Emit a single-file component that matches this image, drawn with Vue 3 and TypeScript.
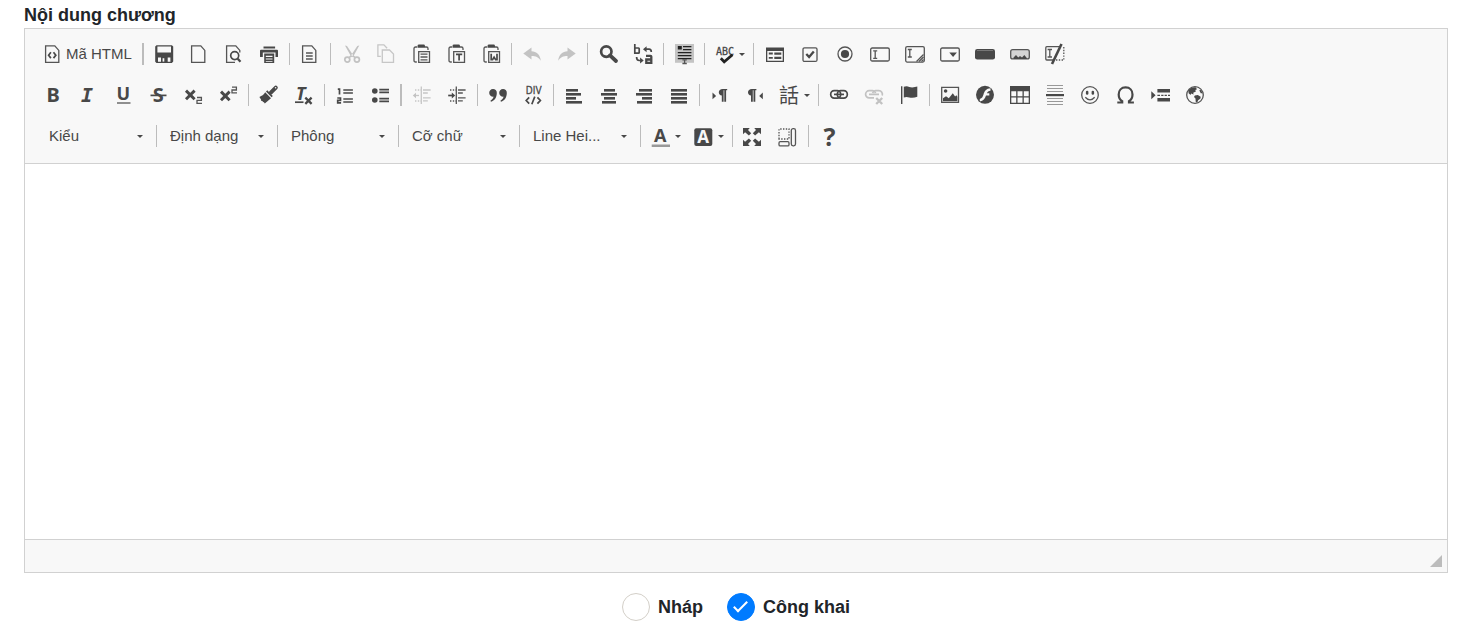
<script setup lang="ts">
import { ref } from 'vue'

interface Tool {
  id: string
  label: string
  text?: string
  menu?: boolean
  off?: boolean
}

type Group = Tool[]

const t = (id: string, label: string, extra: Partial<Tool> = {}): Tool => ({ id, label, ...extra })

const rowOne: Group[] = [
  [t('source', 'Mã HTML', { text: 'Mã HTML' })],
  [t('save', 'Lưu'), t('page', 'Trang mới'), t('preview', 'Xem trước'), t('print', 'In')],
  [t('template', 'Mẫu dựng sẵn')],
  [
    t('cut', 'Cắt', { off: true }),
    t('copy', 'Sao chép', { off: true }),
    t('paste', 'Dán'),
    t('pasteText', 'Dán theo định dạng văn bản thuần'),
    t('pasteWord', 'Dán với định dạng Word'),
  ],
  [t('undo', 'Khôi phục thao tác', { off: true }), t('redo', 'Làm lại thao tác', { off: true })],
  [t('find', 'Tìm kiếm'), t('replace', 'Thay thế')],
  [t('selectAll', 'Chọn tất cả')],
  [t('spell', 'Kiểm tra chính tả', { menu: true })],
  [
    t('form', 'Biểu mẫu'),
    t('checkbox', 'Nút kiểm'),
    t('radio', 'Nút chọn'),
    t('textField', 'Trường văn bản'),
    t('textArea', 'Vùng văn bản'),
    t('select', 'Ô chọn'),
    t('button', 'Nút'),
    t('imageButton', 'Nút hình ảnh'),
    t('hidden', 'Trường ẩn'),
  ],
]

const rowTwo: Group[] = [
  [
    t('bold', 'Đậm'),
    t('italic', 'Nghiêng'),
    t('underline', 'Gạch chân'),
    t('strike', 'Gạch xuyên ngang'),
    t('sub', 'Chỉ số dưới'),
    t('sup', 'Chỉ số trên'),
  ],
  [t('brush', 'Sao chép định dạng'), t('clear', 'Xoá định dạng')],
  [t('ol', 'Danh sách có thứ tự'), t('ul', 'Danh sách không thứ tự')],
  [
    t('outdent', 'Dịch ra ngoài', { off: true }),
    t('indent', 'Dịch vào trong'),
  ],
  [t('quote', 'Khối trích dẫn'), t('div', 'Tạo khối các thành phần')],
  [t('left', 'Canh trái'), t('center', 'Canh giữa'), t('right', 'Canh phải'), t('justify', 'Canh đều')],
  [t('ltr', 'Văn bản hướng từ trái sang phải'), t('rtl', 'Văn bản hướng từ phải sang trái'), t('lang', 'Ngôn ngữ', { menu: true })],
  [t('link', 'Chèn liên kết'), t('unlink', 'Xoá liên kết', { off: true }), t('anchor', 'Điểm neo')],
  [
    t('image', 'Hình ảnh'),
    t('flash', 'Flash'),
    t('table', 'Bảng'),
    t('hr', 'Chèn đường phân cách ngang'),
    t('smiley', 'Hình biểu lộ cảm xúc'),
    t('omega', 'Chèn ký tự đặc biệt'),
    t('pageBreak', 'Chèn ngắt trang'),
    t('iframe', 'Iframe'),
  ],
]

const rowThree: Group[] = [
  [t('textColor', 'Màu chữ', { menu: true }), t('bgColor', 'Màu nền', { menu: true })],
  [t('maximize', 'Phóng to tối đa'), t('blocks', 'Hiển thị các khối')],
  [t('about', 'Thông tin')],
]

const combos = ['Kiểu', 'Định dạng', 'Phông', 'Cỡ chữ', 'Line Hei...']

const pageShape = '<path class="ln" d="M2.6 1.8h9.2l4 4.6v12H2.6z"/>'
const clipboard =
  '<path class="ln" d="M5.8 18H4.6Q3 18 3 16.4V4.6Q3 3 4.6 3H6M14 3h1.4Q17 3 17 4.6V6"/><path d="M6.5 3.8V2Q6.5.6 8 .6h4.6Q14 .6 14 2v1.8z"/><path class="ln" d="M7.7 7.6h10.8v10.8H7.7z"/>'
const bars = (rows: number[][]): string =>
  rows.map(([x, w], i) => `<rect x="${x}" y="${[4, 8, 12, 16][i]}" width="${w}" height="2.6"/>`).join('')
const dentLines =
  '<path class="ln" d="M9.3 1.6v17.4M11 5h7.6M11 8h4.8M11 12.8h7.6M11 15.8h4.8"/><path class="ln" stroke-dasharray="1.4 1.4" d="M3 5h6M3 16h6"/>'
const pilcrow = (x: number): string =>
  `<path transform="translate(${x} 0)" d="M8.6 4v1.2H7.5v11.6H5.7V5.2H5v11.6H3.2v-6.2C1.4 10.4.2 9 .2 7.3.2 5.3 1.8 4 4 4z"/>`

const icons: Record<string, string> = {
  source: pageShape + '<path class="ln b" d="M7.9 8.3 5.6 11.2l2.3 2.9M10.5 8.3l2.3 2.9-2.3 2.9"/>',
  save: '<path fill-rule="evenodd" d="M2.500 1.300h15.400l1.300 1.300v15L17.900 19H2.500L1.200 17.700V2.600zM3.400 2.600v6h13.600v-6zM4 13.400v4.300h12.400v-4.300z"/><path d="M7 12.500h6.700V18.500H7z"/><path class="pale" d="M8.600 14.200h1.700v3.400H8.600z"/>',
  page: pageShape,
  preview: '<path class="ln" d="M11 18.400H2.600V1.800h9.200l4 4.600v2"/><circle class="ln b" cx="10.700" cy="11.600" r="4"/><path class="ln w" d="m13.700 14.800 2.800 3"/>',
  print: '<path d="M4.500 2.600h11.600v1.800H4.500zM2 5.700h16q1 0 1 1V13h-2.500V8.500H3.800V13H1V6.700q0-1 1-1z"/><path fill-rule="evenodd" d="M5.200 9.400h10V19h-10zm1.600 2.400v1.100h6.700v-1.100zm0 2.700v1.100h6.700v-1.100zm0 2.400v.9h6.700v-.9z"/>',
  template: pageShape + '<path class="ln" d="M6 9h6.700M6 12h6.700M6 15h6.700"/>',
  cut: '<path d="M4 1.500 6 2l6.300 9.600-1.800 1.600zM18.300 1.500 16.300 2 10 11.600l1.800 1.600z"/><circle class="ln b" cx="6.300" cy="15.600" r="2.500"/><circle class="ln b" cx="15.900" cy="15.600" r="2.500"/><path class="ln b" d="m8 13.700 2.600-2M14.200 13.700l-2.600-2"/>',
  copy: '<path class="ln" d="M4.800 12.400H1.900V.8h6l3.200 3.400M6.300 6h7.200l4 4v8.400H6.300z"/>',
  paste: clipboard + '<path class="ln" d="M9.500 10.200h7M9.500 13h7M9.500 15.800h7"/>',
  pasteText: clipboard + '<path class="ln b" d="M10 10.400h6.200M13.100 10.400v6.200"/>',
  pasteWord: clipboard + '<path class="ln b" d="M10.200 9.800v5.800h1.400l1.500-2.500 1.500 2.500H16V9.800"/>',
  undo: '<path d="M1.300 9.400 9.500 3.600v3.700c5 .2 8.700 3.200 9.300 9.500-2.300-3.600-5-4.700-9.300-4.700v3.300z"/>',
  redo: '<path d="M18.700 9.400 10.500 3.600v3.700c-5 .2-8.700 3.200-9.300 9.500 2.300-3.600 5-4.700 9.300-4.700v3.300z"/>',
  find: '<circle cx="8.300" cy="7.600" r="5.200" fill="none" stroke="#484848" stroke-width="2.700"/><path d="m12 11.400 6 5.600" fill="none" stroke="#484848" stroke-width="3.800" stroke-linecap="round"/>',
  replace: '<path class="ln b" d="M1.800 0v9.200h3.700q.7 0 .7-.8V4.800q0-.8-.7-.8H1.800"/><path class="ln w" d="M13 11.800h4.500q.8 0 .8.800v6.200h-5v-3.300h5"/><path class="ln b" d="M12 5.200h4q2.300 0 2.300 2.700M3.600 13q0 3.500 2.600 3.500h2"/><path d="m10 5.200 3.600-3v6zM10.700 16.500l-3.600-3v6z"/>',
  selectAll: '<path fill="#c4c4c4" d="M1 0h19v18.800H1z"/><path fill="#222" d="M3.800 2h4v3.500h-4zM9 2h8.400v1.300H9zM9 4.900h8.400v1.300H9zM3.800 7.900h13.600v1.300H3.800zM3.800 10.900h13.600v1.300H3.800zM3.800 13.900h13.600v1.300H3.800z"/><path class="ln" d="M8.400 15.900h4.400M10.600 15.900v3.700M8.400 19.500h4.400"/>',
  spell: '<text class="mono" x="1" y="11" font-size="10" stroke="#484848" stroke-width=".3">ABC</text><path d="m5.800 14.300 3.400 3.500 8.300-7" fill="none" stroke="#222" stroke-width="2.700"/>',
  form: '<path fill-rule="evenodd" d="M2 3.600h18V18H2zM3.300 7v9.700h15.400V7z"/><path d="M4.800 8.600h4v1.800h-4zM4.800 13h4v1.800h-4zM10.300 8.400h7v2.400h-7zM10.300 12.700h7v2.400h-7z"/>',
  checkbox: '<rect class="ln" x="4" y="3.800" width="14" height="13.600" rx="1.500"/><path class="ln w" d="m7.300 10 2.800 3 4.700-5.600"/>',
  radio: '<circle class="ln" cx="11" cy="10" r="7"/><circle cx="11" cy="10" r="4.100"/>',
  textField: '<rect class="ln" x="1.700" y="4" width="18.600" height="13" rx="1.500"/><path class="ln" d="M4.200 6.900h4M6.200 6.900v7.400M4.200 14.300h4"/>',
  textArea: '<rect class="ln" x="1.700" y="2.600" width="18.600" height="15.500" rx="1.500"/><path class="ln" d="M3.800 5.500h4M5.800 5.500V13M3.800 13h4M12.500 17.500l7-7M15 17.500l4.500-4.500M17.500 17.500l2-2"/>',
  select: '<rect class="ln" x="1.700" y="4" width="18.600" height="13" rx="1.500"/><path d="M10.300 8.600h7.600L14.100 13z"/>',
  button: '<rect x="1" y="5" width="20" height="10.600" rx="2.300"/><path fill="none" stroke="#777" d="M3 6.500h16"/>',
  imageButton: '<rect x="1.700" y="5.700" width="18.600" height="9.200" rx="2" fill="#d4d4d4" stroke="#555" stroke-width="1.300"/><path d="M4.500 15v-1.500L7 11l2.300 2.500L11 12l2 1.500 2.300-2.600 2.500 3V15z"/>',
  hidden: '<path class="ln" d="M9 16H2.800q-1 0-1-1V3.700q0-1 1-1H15M3.600 5.500H8M5.800 5.500V13M3.600 13H8"/><path fill="none" stroke="#484848" stroke-width="2.600" d="M8 20 17.500 0"/><path class="ln" stroke-dasharray="1.400 1.400" d="M19.800 3v13M12 16h8"/>',
  bold: '<text class="noto heavy" x="3.500" y="17" font-size="20">B</text>',
  italic: '<text class="mono heavy slant" x="3" y="17" font-size="20">I</text>',
  underline: '<text class="noto heavy" x="3.600" y="15" font-size="18">U</text><path class="ln" d="M4 18h13.500"/>',
  strike: '<text class="noto heavy" x="4.800" y="17" font-size="20">S</text><path class="ln b" d="M2.500 10.400h16"/>',
  sub: '<path fill="none" stroke="#484848" stroke-width="2.900" d="m3 5.600 8.600 8.600M11.600 5.600 3 14.200"/><path class="ln" d="M14 12.500h4.400v2.800H14v3h5"/>',
  sup: '<path fill="none" stroke="#484848" stroke-width="2.900" d="m3 6.600 8.600 8.600M11.600 6.600 3 15.200"/><path class="ln" d="M14 2.200h4.400V5H14v2.800h5"/>',
  brush: '<path d="M8.300 5.200 13.800 11l-1.200 1.300-5.600-5.700zM6.200 7.300l5.800 5.900-6.200 5.200-1-1.300-.8.200-.5-1.300-1.200.1-.3-1.500-1.600-2.600C2.900 10.800 4.700 10 6.200 7.300z"/><path fill="none" stroke="#484848" stroke-width="4" stroke-linecap="round" d="m11.800 7.700 5-5"/><circle class="pale" cx="16.600" cy="2.700" r=".8"/>',
  clear: '<text class="noto heavy slant" x="2" y="14.500" font-size="18">T</text><path class="ln b" d="M1 17.200h8.500"/><path class="ln w" d="m11.300 12.700 6.300 6.100M17.600 12.700l-6.300 6.100"/>',
  ol: '<path class="ln b" d="M8.300 5h9.600M8.300 8h9.600M8.300 14h9.600M8.300 17h9.600M2.800 4.200h1.700V9.500M2.300 13h3.200v2.300H2.700v2.500h3.400"/>',
  ul: '<circle cx="4.800" cy="6" r="2.800"/><circle cx="4.800" cy="15" r="2.800"/><path class="ln b" d="M9.300 4.600H19M9.300 7.400H19M9.300 13.600H19M9.300 16.400H19"/>',
  outdent: dentLines + '<path class="ln" d="M2.200 10.500h4.800"/><path d="m.8 10.500 3.200-2.800v5.600z"/>',
  indent: dentLines + '<path class="ln b" d="M1.200 10.500h4.600"/><path d="m8.200 10.500-3.400-3v6z"/>',
  quote: '<path d="M4.900 4a3.700 3.700 0 0 1 3.900 3.900c0 4.500-2.300 7.600-5.800 8.900l-.6-1.100c1.900-1.100 3-2.400 3.100-4.100A3.800 3.800 0 0 1 1.200 7.900 3.700 3.700 0 0 1 4.900 4zM14.900 4a3.700 3.700 0 0 1 3.900 3.900c0 4.500-2.300 7.600-5.800 8.900l-.6-1.100c1.900-1.100 3-2.400 3.100-4.100a3.800 3.800 0 0 1-4.300-3.700A3.700 3.700 0 0 1 14.900 4z"/>',
  div: '<text class="condensed" x="2.800" y="9.300" font-size="10" stroke="#484848" stroke-width=".3">DIV</text><path class="ln b" d="m6.200 12.300-3 3.200 3 3.200M14.400 12.300l3 3.200-3 3.200M11.800 11.600l-3 7.600"/>',
  left: bars([[2, 12], [2, 15], [2, 10], [2, 16]]),
  center: bars([[5, 11], [2, 16], [5, 11], [3, 14]]),
  right: bars([[5, 13], [2, 16], [8, 10], [3, 15]]),
  justify: bars([[2, 16], [2, 16], [2, 16], [2, 16]]),
  ltr: '<path d="m2.500 7.600 3.600 3.300-3.600 3.300z"/>' + pilcrow(8.6),
  rtl: pilcrow(2.8) + '<path d="M17.800 7.600 14.200 10.900l3.600 3.300z"/>',
  lang: '<text class="cjk" x="-1" y="17.500" font-size="20">話</text>',
  link: '<rect class="ln b" x="1.700" y="5.700" width="10" height="7.400" rx="3.500"/><rect class="ln b" x="8.300" y="5.700" width="10" height="7.400" rx="3.500"/><path class="ln b" d="M5 9.400h10"/>',
  unlink: '<path class="ln b" d="M10 12.900H5.200a3.600 3.600 0 0 1 0-7.200h3.400a3.400 3.400 0 0 1 3 2.300M5 9.300h10M8.600 8a3.400 3.400 0 0 1 3-2.300h3.300a3.600 3.600 0 0 1 3.300 4.800"/><path class="ln w" d="m12.200 13 6 6M18.200 13l-6 6"/>',
  anchor: '<path d="M2 1.300h1.400V19H2zM4.800 1.800c3.500-1.800 5.600.6 8.300.6 2.300 0 3.600-.8 5.200-.8v10.200c-1.800.5-3.300.9-5.200.9-2.900 0-5-1.700-8.300-.2z"/>',
  image: '<path class="ln" d="M1.700 2.400h16.800V17.400H1.700z"/><circle cx="5.600" cy="6" r="1.800"/><path d="M3 16.200v-3l3-2 2.800 2 4-5 2.300 3.200 1.300-1.200 1 1.600v4.400z"/>',
  flash: '<circle cx="10" cy="9.800" r="9"/><path class="pale" d="M15.500 3.200v2.600c-2.100.1-2.900.9-3.600 2.500h2.400v2.300h-3.300c-1 3.300-2.700 5.600-6.200 5.900v-2.600c2.200-.3 3-2 3.700-4.300.9-3.500 2.800-6.300 7-6.400z"/>',
  table: '<path fill-rule="evenodd" d="M0 1h20v18H0zm1.300 5.300v5h4.900v-5zm6.200 0v5h5v-5zm6.300 0v5h4.900v-5zM1.300 12.600v5.100h4.900v-5.100zm6.200 0v5.100h5v-5.100zm6.300 0v5.100h4.900v-5.100z"/>',
  hr: '<path stroke="#999" fill="none" d="M2 .5h16M2 3.500h16M2 6.500h16M2 13.500h16M2 16.500h16M2 19.500h16"/><path d="M1 9h18v2.200H1z"/>',
  smiley: '<circle class="ln" cx="10" cy="10" r="8.300"/><rect x="5.900" y="5.800" width="2.500" height="4" rx="1.200"/><rect x="11.600" y="5.800" width="2.500" height="4" rx="1.200"/><path class="ln" d="M5.300 12.200q4.700 5.300 9.400 0"/>',
  omega: '<path fill="none" stroke="#484848" stroke-width="2.200" d="M2.300 17.500h4.900v-1.300C4.600 14.600 3.700 12.200 3.700 9.400c0-4 2.600-7 6.900-7s6.900 3 6.900 7c0 2.800-.9 5.200-3.500 6.800v1.300h4.900"/>',
  pageBreak: '<path d="m1.300 6.200 4.300 4-4.300 4zM7.400 4H20v3.600H7.400zM7.400 13H20v3.600H7.400zM7.400 9.800H10V11H7.400zM11.200 9.800h2.300V11h-2.300zM14.600 9.800h2.300V11h-2.300zM18 9.800h2V11h-2z"/>',
  iframe: '<circle class="ln" cx="10" cy="10" r="8.300"/><path d="M3.300 5.500C5 3.200 7.600 2.200 10.600 2.300L12 4.200 10.300 5l.6 1.500-2.700 1.300.4 1.600-2.500-.8-.5 1.500-2-1.900zM9.800 10.500l3-.6 2.900 1.900-.4 2-2.200 1.500-.9 2.500-1.500-1-.2-3.200-1.500-1.600zM14.200 5.200l1.800-.3 1.600 3.300-1.800.1z"/>',
  textColor: '<text class="noto heavy" x="3" y="15.800" font-size="18">A</text><path fill="#999" d="M.7 18.500H19V21H.7z"/>',
  bgColor: '<rect x=".3" y="2.200" width="18" height="17.800" rx="2"/><text class="noto heavy pale" x="3.200" y="17" font-size="17">A</text>',
  maximize: '<path d="M0 2h6.800L5 4l3.200 3.200L5.900 9.500 2.100 6.200 0 8.300zM18 2v6.300l-2.100-2.100L12.100 9.500 9.800 7.200 13 4l-1.800-2zM0 20v-6.300l2.100 2.100L5.900 12.500l2.300 2.300L5 18l1.800 2zM18 20h-6.800l1.800-2-3.200-3.200 2.300-2.300 3.800 3.300 2.100-2.100z"/>',
  blocks: '<path class="ln" stroke-dasharray="1.400 1.400" d="M1 13V3h10v10z"/><rect class="ln" x="1" y="15.700" width="10" height="4.200" rx="1.200"/><rect class="ln" x="13.300" y="2.700" width="4.200" height="17.200" rx="1.800"/>',
  about: '<text class="noto heavy" x="4.500" y="20" font-size="25">?</text>',
}

const content = ref('')
const status = ref('public')
</script>

<template>
  <main class="page">
    <label class="title" for="chapter-content">Nội dung chương</label>
    <section class="editor">
      <div class="toolbar" role="toolbar" aria-label="Thanh công cụ">
        <div v-for="(row, r) in [rowOne, rowTwo, rowThree]" :key="r" class="row">
          <div v-if="r === 2" class="combos">
            <div v-for="name in combos" :key="name" class="combo">
              <select :aria-label="name">
                <option>{{ name }}</option>
              </select>
              <span class="arrow"></span>
            </div>
          </div>
          <div
            v-for="(group, g) in row"
            :key="g"
            class="group"
            :class="{ strong: (r === 0 && g === 0) || (r === 1 && g === 2), last: g === row.length - 1 }"
          >
            <button
              v-for="tool in group"
              :key="tool.id"
              type="button"
              class="tool"
              :class="{ off: tool.off, menu: tool.menu, wide: tool.text }"
              :title="tool.label"
              :aria-label="tool.label"
              :disabled="tool.off"
            >
              <svg class="icon" viewBox="0 0 20 20" aria-hidden="true" v-html="icons[tool.id]"></svg>
              <span v-if="tool.text" class="caption">{{ tool.text }}</span>
              <span v-if="tool.menu" class="arrow"></span>
            </button>
          </div>
        </div>
      </div>
      <textarea id="chapter-content" v-model="content" class="content"></textarea>
      <div class="footer"><span class="grip"></span></div>
    </section>
    <div class="status">
      <label class="choice"><input v-model="status" type="radio" name="status" value="draft" />Nháp</label>
      <label class="choice"><input v-model="status" type="radio" name="status" value="public" />Công khai</label>
    </div>
  </main>
</template>

<style>
body {
  margin: 0;
  background: #fff;
}
</style>

<style scoped>
.page {
  padding: 3px 23px 8px 24px;
  font-family: "Liberation Sans", Arial, sans-serif;
  color: #212529;
}
.title {
  display: block;
  font-size: 18px;
  font-weight: 700;
  line-height: 25px;
}
.editor {
  border: 1px solid #d1d1d1;
}
.toolbar {
  display: flex;
  flex-direction: column;
  gap: 1px;
  padding: 5px 11px 7px;
  background: #f8f8f8;
  border-bottom: 1px solid #d1d1d1;
}
.row,
.combos {
  display: flex;
  flex-wrap: wrap;
  align-items: center;
}
.row {
  min-height: 40px;
}
.combos {
  padding-left: 3px;
}
.group,
.combo {
  display: flex;
  align-items: center;
}
.group::after,
.combo::after {
  content: "";
  width: 1px;
  height: 22px;
  margin: 0 3px 0 2px;
  background: #bcbcbc;
}
.group.strong::after {
  width: 2px;
}
.group.last::after {
  display: none;
}
.tool {
  display: flex;
  align-items: center;
  width: 35px;
  height: 40px;
  padding: 0 0 0 7px;
  border: 0;
  background: none;
  color: #484848;
  font: 15px/20px "Liberation Sans", Arial, sans-serif;
}
.tool.menu {
  width: 43px;
}
.tool.wide {
  width: auto;
  padding-right: 8px;
}
.caption {
  margin-left: 3px;
  white-space: nowrap;
}
.icon {
  flex: none;
  width: 20px;
  height: 20px;
  overflow: visible;
  fill: #484848;
}
.off .icon {
  opacity: 0.3;
}
.icon :deep(.ln) {
  fill: none;
  stroke: #555;
  stroke-width: 1.3;
}
.icon :deep(.ln.b) {
  stroke: #484848;
  stroke-width: 1.7;
}
.icon :deep(.ln.w) {
  stroke: #484848;
  stroke-width: 2.3;
}
.icon :deep(.pale) {
  fill: #f8f8f8;
}
.icon :deep(.noto) {
  font-family: "Noto Sans", sans-serif;
}
.icon :deep(.mono) {
  font-family: "DejaVu Sans Mono", monospace;
}
.icon :deep(.condensed) {
  font-family: "DejaVu Sans Condensed", "DejaVu Sans", sans-serif;
}
.icon :deep(.cjk) {
  font-family: "Noto Sans CJK TC", sans-serif;
}
.icon :deep(.heavy) {
  font-weight: 700;
}
.icon :deep(.slant) {
  font-style: italic;
}
.arrow {
  flex: none;
  width: 0;
  height: 0;
  border: 3px solid transparent;
  border-top-color: #484848;
  border-bottom: 0;
}
.tool .arrow {
  margin-left: 4px;
}
.combo select {
  width: 98px;
  height: 40px;
  padding: 0 0 0 10px;
  border: 0;
  appearance: none;
  background: none;
  color: #484848;
  font: 15px/20px "Liberation Sans", Arial, sans-serif;
}
.combo .arrow {
  margin-right: 11px;
}
.content {
  display: block;
  box-sizing: border-box;
  width: 100%;
  height: 375px;
  padding: 20px;
  border: 0;
  outline: 0;
  resize: none;
  background: #fff;
  font: 16px/24px "Liberation Sans", Arial, sans-serif;
}
.footer {
  display: flex;
  align-items: flex-end;
  justify-content: flex-end;
  box-sizing: border-box;
  height: 33px;
  padding: 5px;
  border-top: 1px solid #d1d1d1;
  background: #f8f8f8;
}
.grip {
  width: 12px;
  height: 12px;
  background: #bcbcbc;
  clip-path: polygon(100% 0, 100% 100%, 0 100%);
}
.status {
  display: flex;
  justify-content: center;
  gap: 24px;
  margin-top: 20px;
}
.choice {
  display: flex;
  align-items: center;
  gap: 8px;
  font-size: 18px;
  font-weight: 700;
  line-height: 26px;
}
.choice input {
  display: grid;
  place-items: center;
  box-sizing: border-box;
  width: 28px;
  height: 28px;
  margin: 0;
  appearance: none;
  border: 1px solid #d3cfc8;
  border-radius: 50%;
  background: #fff;
}
.choice input:checked {
  border-color: #007bff;
  background: #007bff;
}
.choice input:checked::after {
  content: "";
  width: 5px;
  height: 12px;
  margin-bottom: 4px;
  border: solid #fff;
  border-width: 0 2px 2px 0;
  transform: rotate(45deg);
}
</style>
